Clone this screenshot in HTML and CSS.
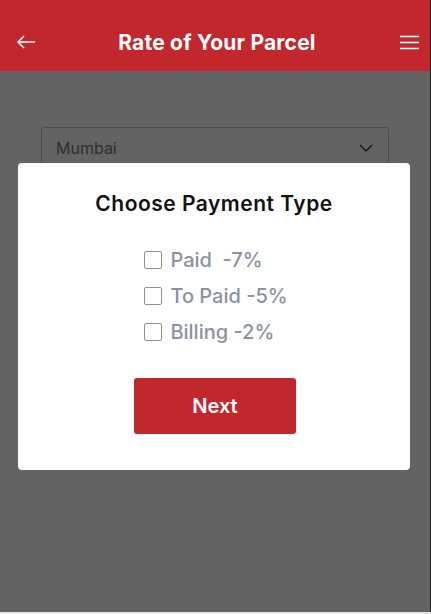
FILE: index.html
```html
<!DOCTYPE html>
<html lang="en">
<head>
    <meta charset="UTF-8">
    <meta name="viewport" content="width=device-width, initial-scale=1.0">
    <title>Rate of Your Parcel</title>
    <link rel="stylesheet" href="styles.css">
</head>
<body>
    <div class="app">
        <header class="topbar">
            <svg class="icon" width="22" height="22" viewBox="0 0 22 22">
                <path d="M20 11H3M9 5L3 11L9 17" fill="none" stroke="#fff" stroke-width="1.6"/>
            </svg>
            <h1>Rate of Your Parcel</h1>
            <svg class="icon" width="19" height="15" viewBox="0 0 19 15">
                <path d="M0 1.5H19M0 7.5H19M0 13.5H19" stroke="#fff" stroke-width="1.7"/>
            </svg>
        </header>

        <main class="content">
            <div class="select">
                <span>Mumbai</span>
                <svg width="14" height="8" viewBox="0 0 14 8">
                    <path d="M1 1L7 7L13 1" fill="none" stroke="#333" stroke-width="1.3"/>
                </svg>
            </div>
        </main>

        <!-- payment type popup -->
        <div class="overlay">
            <div class="modal">
                <h2>Choose Payment Type</h2>
                <div class="options">
                    <label class="option"><span class="box"></span>Paid&nbsp; -7%</label>
                    <label class="option"><span class="box"></span>To Paid -5%</label>
                    <label class="option"><span class="box"></span>Billing -2%</label>
                </div>
                <button class="next">Next</button>
            </div>
        </div>
    </div>
</body>
</html>
```

FILE: styles.css
```css
body {
    margin: 0;
    background-color: #e6e6e6;
    font-family: Inter, "Noto Sans", sans-serif;
}
.app {
    position: relative;
    width: 430px;
    height: 612px;
    border-right: 1px solid #1e1e1e;
    background-color: #fff;
    overflow: hidden;
}
.topbar {
    height: 71px;
    background-color: #c1272d;
    display: flex;
    align-items: center;
    justify-content: space-between;
    padding: 13px 11px 0 15px;
    box-sizing: border-box;
}
.topbar h1 {
    margin: 0 3px 0 0;
    color: #fff;
    font-size: 21px;
    font-weight: 700;
    letter-spacing: 0.2px;
}
.content {
    padding: 56px 41px 0;
}
.select {
    height: 40px;
    border: 1px solid #c4c4c4;
    border-radius: 3px;
    display: flex;
    align-items: center;
    justify-content: space-between;
    padding: 0 15px 0 14px;
    font-size: 16px;
    color: #7a7a7a;
}
.overlay {
    position: absolute;
    top: 71px;
    left: 0;
    right: 0;
    bottom: 0;
    background-color: rgba(0, 0, 0, 0.61);
    padding: 92px 20px 0 18px;
}
.modal {
    background-color: #fff;
    border-radius: 4px;
    height: 307px;
    box-sizing: border-box;
    padding-top: 28px;
    display: flex;
    flex-direction: column;
    align-items: center;
}
.modal h2 {
    margin: 0;
    font-size: 21px;
    font-weight: 600;
    letter-spacing: 0.5px;
    color: #111;
}
.options {
    margin-top: 32px;
    display: flex;
    flex-direction: column;
    gap: 12px;
    margin-left: 4px;
}
.option {
    display: flex;
    align-items: center;
    gap: 8px;
    height: 24px;
    font-size: 20px;
    font-weight: 500;
    color: #8a92a3;
}
.box {
    width: 16px;
    height: 16px;
    border: 1.5px solid #8f8f8f;
    border-radius: 2px;
}
.next {
    margin-top: 34px;
    margin-left: 2px;
    width: 162px;
    height: 56px;
    border: none;
    border-radius: 3px;
    background-color: #c1272d;
    color: #fff;
    font-family: inherit;
    font-size: 20px;
    font-weight: 600;
}
```
